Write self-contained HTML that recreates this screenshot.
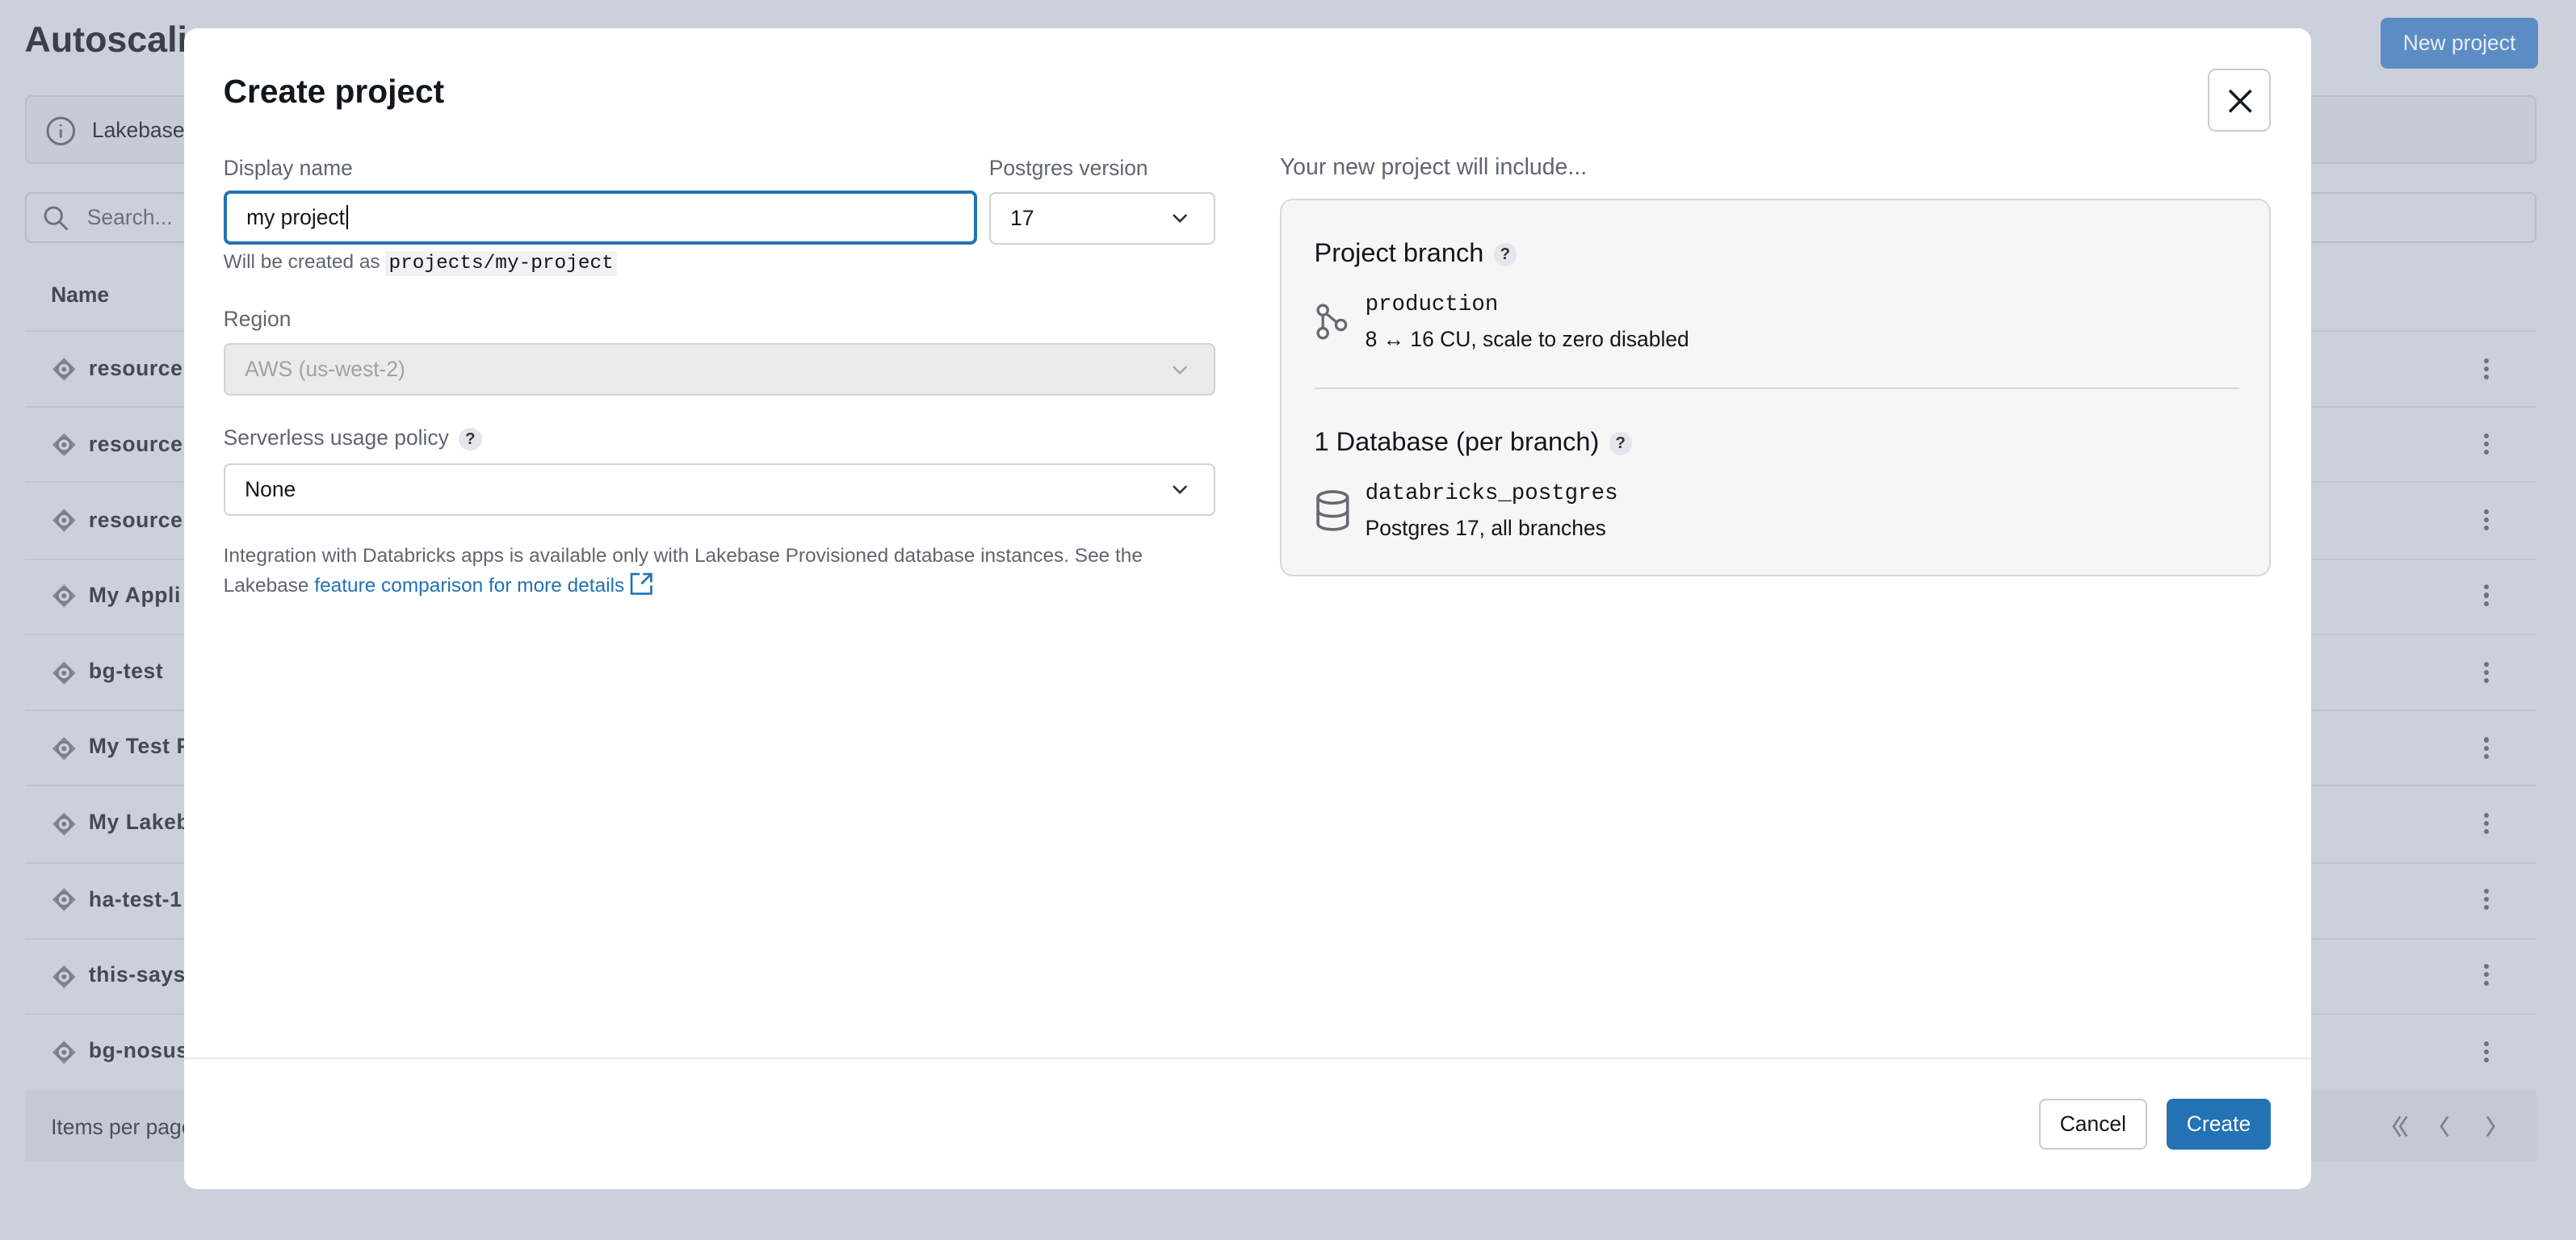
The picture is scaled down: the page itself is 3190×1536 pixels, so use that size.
<!DOCTYPE html>
<html><head><meta charset="utf-8"><style>
html,body{margin:0;padding:0}
body{width:1568px;height:755px;zoom:2.03444;background:#cbd0db;font-family:"Liberation Sans",sans-serif;position:relative;overflow:hidden;color:#1f272d}
.a{position:absolute}
.title{left:15px;top:12px;font-size:22px;font-weight:bold;color:#3b404b}
.np{left:1449px;top:11px;width:96px;height:31px;background:#5b8dc4;color:#e6edf5;border-radius:4px;font-size:13px;text-align:center;line-height:31px}
.info{left:15px;top:58px;width:1529px;height:42px;border:1px solid #b9bec9;border-radius:4px;background:#c6cbd6;box-sizing:border-box}
.search{left:15px;top:117px;width:1529px;height:31px;border:1px solid #b6bcc8;border-radius:4px;box-sizing:border-box}
.row{left:15px;width:1529px;height:46px;border-top:1px solid #bec3ce;box-sizing:border-box}
.rt{left:54px;font-size:13px;font-weight:bold;color:#434955;letter-spacing:.3px}
.ri{left:31px}
.keb{left:1512px;width:3px}
.keb i{display:block;width:3px;height:3px;border-radius:50%;background:#6c717b;margin-bottom:2px}
.foot{left:15px;top:664px;width:1529px;height:43px;background:#c4c9d4}
.modal{left:112px;top:17px;width:1295px;height:707px;background:#fff;border-radius:8px}
.lbl{font-size:13px;color:#5f6670}
.inp{border:1px solid #cfd2d6;border-radius:4px;box-sizing:border-box;background:#fff;font-size:13px;padding-left:12px;line-height:30px}
.chev{position:absolute;right:16px;top:10px}
.mono{font-family:"Liberation Mono",monospace}
.q{display:inline-block;width:14px;height:14px;border-radius:50%;background:#e3e6ec;font-size:10px;font-weight:bold;text-align:center;line-height:14px;color:#333;vertical-align:middle;margin-left:6px}
</style></head><body>
<div class="a title">Autoscaling</div>
<div class="a np">New project</div>
<div class="a info"><svg class="a" style="left:12px;top:12px" width="18" height="18" viewBox="0 0 18 18"><circle cx="9" cy="9" r="8" fill="none" stroke="#6b717c" stroke-width="1.4"/><path d="M9 8v5M9 5v1" stroke="#6b717c" stroke-width="1.4"/></svg><span class="a" style="left:40px;top:13px;font-size:13px;color:#3b404b">Lakebase</span></div>
<div class="a search"><svg class="a" style="left:10px;top:7px" width="16" height="16" viewBox="0 0 16 16"><circle cx="6.5" cy="6.5" r="5" fill="none" stroke="#6b717c" stroke-width="1.4"/><path d="M10 10l5 5" stroke="#6b717c" stroke-width="1.4"/></svg><span class="a" style="left:37px;top:7px;font-size:13px;color:#6b717c">Search...</span></div>
<div class="a" style="left:31px;top:172px;font-size:13px;font-weight:bold;color:#434955">Name</div>

<div class="a row" style="top:201px"></div><div class="a row" style="top:247px"></div><div class="a row" style="top:293px"></div><div class="a row" style="top:340px"></div><div class="a row" style="top:386px"></div><div class="a row" style="top:432px"></div><div class="a row" style="top:478px"></div><div class="a row" style="top:525px"></div><div class="a row" style="top:571px"></div><div class="a row" style="top:617px"></div>

<div class="a rt" style="top:217px">resource</div>
<div class="a rt" style="top:263px">resource</div>
<div class="a rt" style="top:309px">resource</div>
<div class="a rt" style="top:355px">My Appli</div>
<div class="a rt" style="top:401px">bg-test</div>
<div class="a rt" style="top:447px">My Test P</div>
<div class="a rt" style="top:493px">My Lakeb</div>
<div class="a rt" style="top:540px">ha-test-1</div>
<div class="a rt" style="top:586px">this-says</div>
<div class="a rt" style="top:632px">bg-nosus</div>

<svg class="a" style="left:30px;top:216px" width="18" height="440" viewBox="0 0 18 440">
<g id="ic" fill="none" stroke="#7a7f89" stroke-width="1.6"><path d="M9 2L16 9L9 16L2 9Z" fill="#7a7f89" stroke="none" opacity=".9"/><circle cx="9" cy="9" r="4" fill="#cbd0db" stroke="#7a7f89"/><circle cx="9" cy="9" r="1.5" fill="#7a7f89" stroke="none"/></g>
<use href="#ic" y="46"/><use href="#ic" y="92"/><use href="#ic" y="138"/><use href="#ic" y="185"/><use href="#ic" y="231"/><use href="#ic" y="277"/><use href="#ic" y="323"/><use href="#ic" y="370"/><use href="#ic" y="416"/>
</svg>

<div class="a keb" style="top:218px"><i></i><i></i><i></i></div>
<div class="a keb" style="top:264px"><i></i><i></i><i></i></div>
<div class="a keb" style="top:310px"><i></i><i></i><i></i></div>
<div class="a keb" style="top:356px"><i></i><i></i><i></i></div>
<div class="a keb" style="top:403px"><i></i><i></i><i></i></div>
<div class="a keb" style="top:449px"><i></i><i></i><i></i></div>
<div class="a keb" style="top:495px"><i></i><i></i><i></i></div>
<div class="a keb" style="top:541px"><i></i><i></i><i></i></div>
<div class="a keb" style="top:587px"><i></i><i></i><i></i></div>
<div class="a keb" style="top:634px"><i></i><i></i><i></i></div>

<div class="a foot"><span class="a" style="left:16px;top:15px;font-size:13px;color:#4a505b">Items per page</span>
<svg class="a" style="left:1438px;top:14px" width="70" height="16" viewBox="0 0 70 16" fill="none" stroke="#7c818b" stroke-width="1.3"><path d="M8 2L4 8L8 14M12 2L8 8L12 14M37 2L33 8L37 14M61 2L65 8L61 14"/></svg></div>

<div class="a modal">
<div class="a" style="left:24px;top:27px;font-size:20px;font-weight:600;color:#11171c">Create project</div>
<div class="a" style="left:1232px;top:25px;width:38px;height:38px;border:1px solid #c9ccd1;border-radius:5px;box-sizing:border-box"><svg class="a" style="left:11px;top:11px" width="15" height="15" viewBox="0 0 15 15"><path d="M1 1L14 14M14 1L1 14" stroke="#11171c" stroke-width="1.7"/></svg></div>

<div class="a lbl" style="left:24px;top:78px">Display name</div>
<div class="a inp" style="left:24px;top:99px;width:459px;height:33px;border:2px solid #2272b4;line-height:29px;color:#11171c">my project<span style="border-left:1px solid #000;margin-left:1px"></span></div>
<div class="a lbl" style="left:490px;top:78px">Postgres version</div>
<div class="a inp" style="left:490px;top:100px;width:138px;height:32px;color:#11171c">17<svg class="chev" width="10" height="10" viewBox="0 0 10 10"><path d="M1 3L5 7L9 3" fill="none" stroke="#333" stroke-width="1.3"/></svg></div>
<div class="a" style="left:24px;top:136px;font-size:12px;color:#5f6670">Will be created as <span class="mono" style="background:#f1f2f4;color:#11171c;padding:1px 2px;font-size:12px">projects/my-project</span></div>

<div class="a lbl" style="left:24px;top:170px">Region</div>
<div class="a inp" style="left:24px;top:192px;width:604px;height:32px;background:#ebebeb;color:#9ea3a8">AWS (us-west-2)<svg class="chev" width="10" height="10" viewBox="0 0 10 10"><path d="M1 3L5 7L9 3" fill="none" stroke="#aaa" stroke-width="1.3"/></svg></div>

<div class="a lbl" style="left:24px;top:242px">Serverless usage policy<span class="q">?</span></div>
<div class="a inp" style="left:24px;top:265px;width:604px;height:32px;color:#11171c">None<svg class="chev" width="10" height="10" viewBox="0 0 10 10"><path d="M1 3L5 7L9 3" fill="none" stroke="#333" stroke-width="1.3"/></svg></div>

<div class="a" style="left:24px;top:313px;width:600px;font-size:12px;line-height:18px;color:#5f6670">Integration with Databricks apps is available only with Lakebase Provisioned database instances. See the Lakebase <span style="color:#2272b4">feature comparison for more details</span> <svg width="14" height="14" viewBox="0 0 14 14" style="vertical-align:-2px"><path d="M6 1H1V13H13V8M8 1H13V6M13 1L7 7" fill="none" stroke="#2272b4" stroke-width="1.3"/></svg></div>

<div class="a" style="left:667px;top:77px;font-size:14px;color:#5f6670">Your new project will include...</div>
<div class="a" style="left:667px;top:104px;width:603px;height:230px;background:#f6f6f6;border:1px solid #d6d8db;border-radius:8px;box-sizing:border-box">
<div class="a" style="left:20px;top:23px;font-size:16px;font-weight:500;color:#11171c">Project branch<span class="q">?</span></div>
<svg class="a" style="left:20px;top:62px" width="22" height="24" viewBox="0 0 22 24" fill="none" stroke="#666b72" stroke-width="1.6"><circle cx="5" cy="5" r="3"/><circle cx="5" cy="19" r="3"/><circle cx="16" cy="14" r="3"/><path d="M5 8V16M7 7L13.5 12.5"/></svg>
<div class="a mono" style="left:51px;top:56px;font-size:13.5px;color:#11171c">production</div>
<div class="a" style="left:51px;top:77px;font-size:13px;color:#11171c">8 ↔ 16 CU, scale to zero disabled</div>
<div class="a" style="left:20px;top:114px;width:563px;height:1px;background:#d6d8db"></div>
<div class="a" style="left:20px;top:138px;font-size:16px;font-weight:500;color:#11171c">1 Database (per branch)<span class="q">?</span></div>
<svg class="a" style="left:20px;top:176px" width="22" height="26" viewBox="0 0 22 26" fill="none" stroke="#666b72" stroke-width="1.8"><ellipse cx="11" cy="5" rx="9" ry="3.5"/><path d="M2 5V21C2 23 6 24.5 11 24.5S20 23 20 21V5M2 13C2 15 6 16.5 11 16.5S20 15 20 13"/></svg>
<div class="a mono" style="left:51px;top:171px;font-size:13.5px;color:#11171c">databricks_postgres</div>
<div class="a" style="left:51px;top:192px;font-size:13px;color:#11171c">Postgres 17, all branches</div>
</div>

<div class="a" style="left:0;top:627px;width:1295px;height:1px;background:#e6e7e9"></div>
<div class="a" style="left:1129px;top:652px;width:66px;height:31px;border:1px solid #c9ccd1;border-radius:4px;box-sizing:border-box;font-size:13px;text-align:center;line-height:29px;color:#11171c">Cancel</div>
<div class="a" style="left:1207px;top:652px;width:63px;height:31px;background:#2272b4;border-radius:4px;font-size:13px;text-align:center;line-height:31px;color:#fff">Create</div>
</div>
</body></html>
